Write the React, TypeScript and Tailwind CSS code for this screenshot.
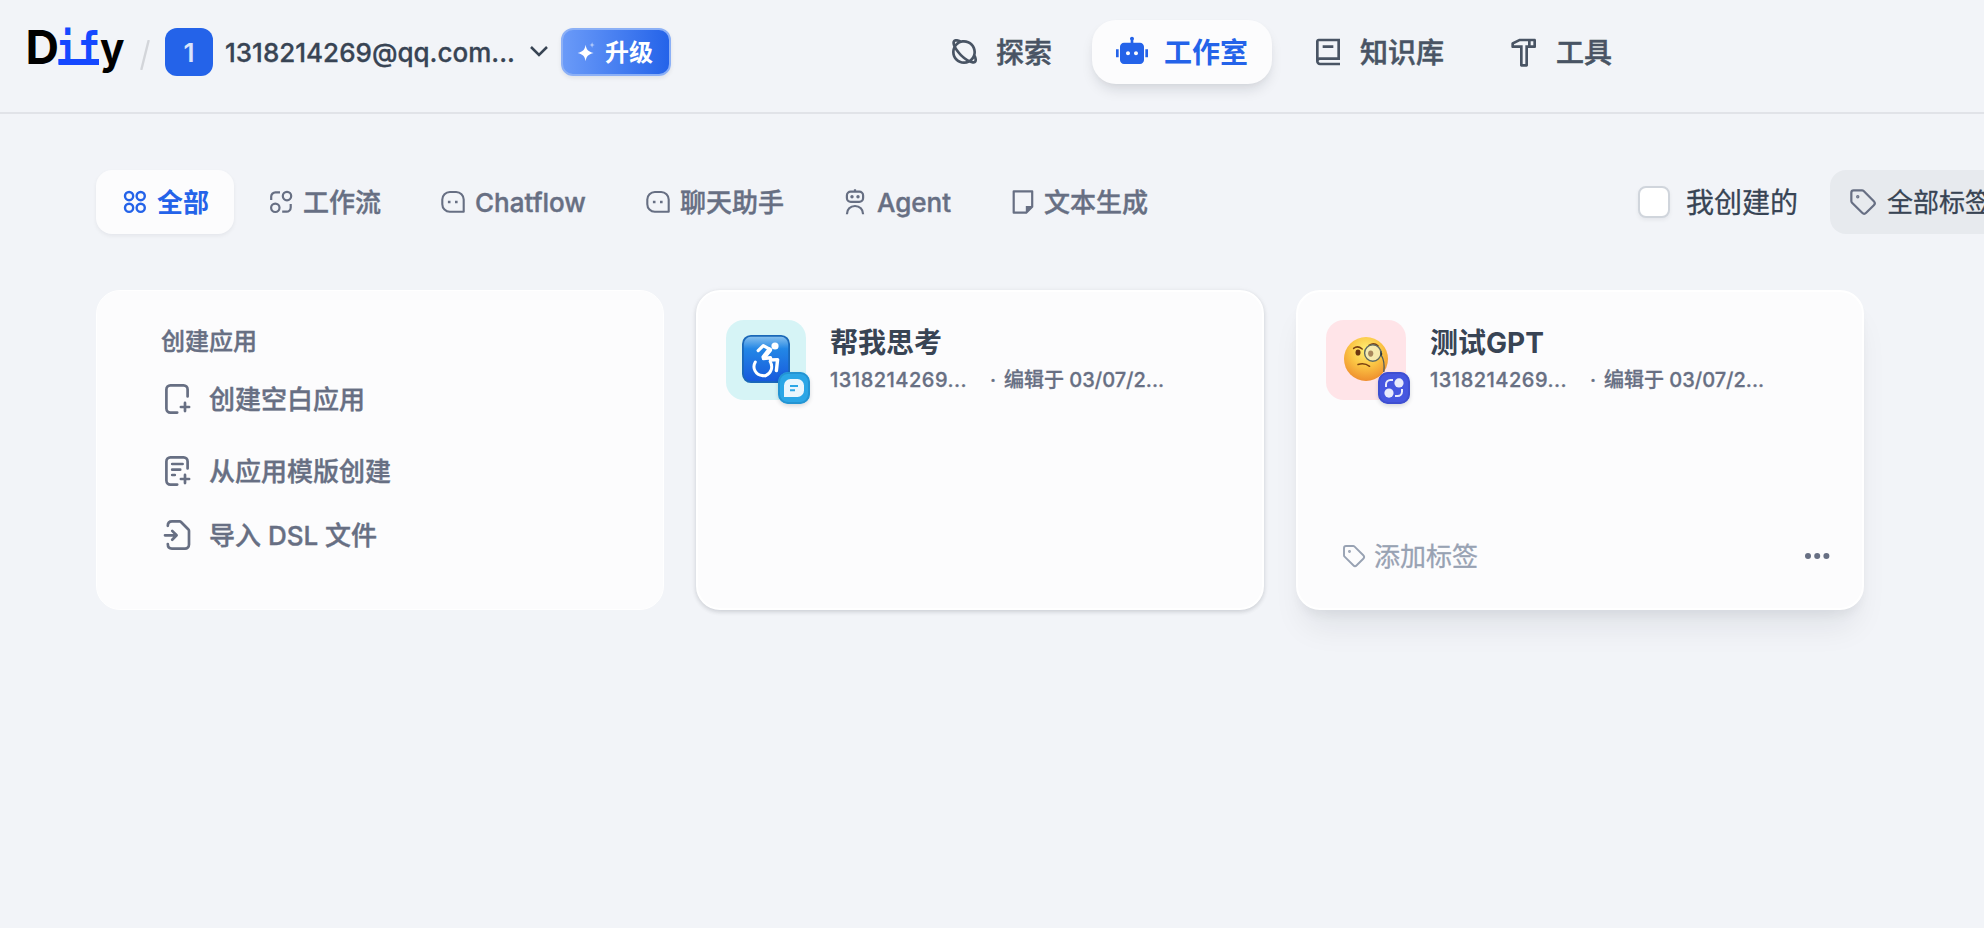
import type { ReactNode } from 'react';
import { RiBook2Line, RiHammerLine, RiPlanetLine, RiRobot2Fill } from 'react-icons/ri';
import { Tag } from 'lucide-react';

type IconProps = { children: ReactNode; size?: string; box?: number; width?: number };

function Glyph({ children, size = 'size-7', box = 28, width = 2.1 }: IconProps) {
  return (
    <svg
      className={`${size} shrink-0`}
      viewBox={`0 0 ${box} ${box}`}
      fill="none"
      stroke="currentColor"
      strokeWidth={width}
      strokeLinecap="butt"
      strokeLinejoin="round"
    >
      {children}
    </svg>
  );
}

const AllIcon = () => (
  <Glyph width={2.4}>
    <circle cx="8.1" cy="8.1" r="4.1" />
    <circle cx="19.7" cy="8.1" r="4.1" />
    <circle cx="8.1" cy="19.8" r="4.1" />
    <circle cx="19.7" cy="19.8" r="4.1" />
  </Glyph>
);

const WorkflowIcon = () => (
  <Glyph width={2.2}>
    <circle cx="20" cy="8.1" r="4.2" />
    <circle cx="8.3" cy="19.8" r="4.2" />
    <path d="M4.2 12V8.6a4.2 4.2 0 0 1 4.2-4.2H13M15.2 23.7h4.3a4.2 4.2 0 0 0 4.2-4.2V16" />
  </Glyph>
);

const ChatIcon = () => (
  <Glyph>
    <path d="M24.7 23.8V11.5a7.5 7.5 0 0 0-7.5-7.5h-6.4a7.5 7.5 0 0 0-7.5 7.5v4.8a7.5 7.5 0 0 0 7.5 7.5Z" />
    <path d="M8.9 14h2.6M16 14h2.6" strokeWidth="2.6" />
  </Glyph>
);

const AgentIcon = () => (
  <Glyph width={2.2}>
    <rect x="5.9" y="3.6" width="16.2" height="10.2" rx="3.8" />
    <path d="M14 1.2v2.4M5.9 26.2c0-4.800 3.400-8.200 8.100-8.200s8.100 3.400 8.100 8.200" />
    <circle cx="11" cy="8.7" r="1.7" fill="currentColor" stroke="none" />
    <circle cx="17" cy="8.7" r="1.7" fill="currentColor" stroke="none" />
  </Glyph>
);

const TextIcon = () => (
  <Glyph width={2.2}>
    <path d="M5.7 3.3h18.5v15.4l-6 6H5.7Z" />
    <path d="M17.8 18H25l-7.200 7.400Z" fill="currentColor" stroke="none" />
  </Glyph>
);

const FileOutline = 'M26.600 13.400V6.400a4 4 0 0 0-4-4H9.400a4 4 0 0 0-4 4v19.200a4 4 0 0 0 4 4h6.800';

const BlankFileIcon = () => (
  <Glyph size="size-8" box={32} width={2.7}>
    <g strokeLinecap="round">
      <path d={FileOutline} />
      <path d="M24 19.900v8.200M19.900 24h8.200" />
    </g>
  </Glyph>
);

const TemplateIcon = () => (
  <Glyph size="size-8" box={32} width={2.7}>
    <g strokeLinecap="round">
      <path d={FileOutline} />
      <path d="M24 19.900v8.200M19.900 24h8.200M11.200 9h10.400M11.200 14.700h8M11.200 20h2.600" />
    </g>
  </Glyph>
);

const ImportIcon = () => (
  <Glyph size="size-8" box={32} width={2.7}>
    <g strokeLinecap="round">
      <path d="M6.800 6.800c0-2.600 1.600-4.400 4.200-4.400h7.600c.6 0 1 .2 1.400.6l7.200 7.200c.5.5.8 1 .8 1.600v13.800a4 4 0 0 1-4 4H11c-2.600 0-4.200-1.800-4.200-4.600" />
      <path d="M4 16.300h11.400M11.200 11.900l4.400 4.400-4.400 4.400" />
    </g>
  </Glyph>
);

function Logo() {
  return (
    <svg className="mt-[26px] h-[52px] w-[100px] shrink-0 overflow-visible" viewBox="0 0 100 52">
      <text x="-0.5" y="38" fontFamily="Inter, sans-serif" fontSize="46.500" fontWeight="700" textLength="33.500" lengthAdjust="spacingAndGlyphs" fill="#000">
        D
      </text>
      <text x="30" y="38" fontFamily="DejaVu Sans Mono, monospace" fontSize="44" fontWeight="700" textLength="44" lengthAdjust="spacingAndGlyphs" fill="#1548ff">
        if
      </text>
      <rect x="32.5" y="33" width="40.500" height="6" fill="#1548ff" />
      <text x="74" y="38" fontFamily="Inter, sans-serif" fontSize="44" fontWeight="700" textLength="24.500" lengthAdjust="spacingAndGlyphs" fill="#000">
        y
      </text>
    </svg>
  );
}

function NavItem({ icon, label, active }: { icon: ReactNode; label: string; active?: boolean }) {
  return (
    <div
      className={`flex h-16 items-center gap-4 rounded-3xl px-6 text-[28px] ${
        active
          ? 'bg-[#fcfcfd] font-bold text-[#2463e9] shadow-[0_8px_14px_-3px_rgba(16,24,40,0.13),0_2px_6px_-2px_rgba(16,24,40,0.05)]'
          : 'font-medium text-[#495464] [-webkit-text-stroke:0.5px]'
      }`}
    >
      {icon}
      <span className="pt-0.5 leading-none whitespace-nowrap">{label}</span>
    </div>
  );
}

function Header() {
  return (
    <header className="flex h-[114px] shrink-0 items-start border-b-2 border-[#e1e3e8] pl-[26px]">
      <Logo />
      <svg className="mt-10 ml-[13px] h-[30px] w-3 shrink-0" viewBox="0 0 12 30">
        <path d="M9.500 1L2.500 29" stroke="#d3d5da" strokeWidth="2.400" strokeLinecap="round" />
      </svg>
      <div className="mt-7 ml-3.5 flex h-12 shrink-0 items-center">
        <div className="flex size-12 items-center justify-center rounded-xl bg-[#2463e9] text-[26px] font-semibold text-[#d9e4fb]">1</div>
        <div className="ml-3 w-[300px] text-[26px] font-medium whitespace-nowrap text-[#384454] [-webkit-text-stroke:0.3px]">
          1318214269@qq.com...
        </div>
        <svg className="ml-1 h-3 w-5 shrink-0" viewBox="0 0 20 12" fill="none" stroke="#384454" strokeWidth="2.500">
          <path d="M2 1l8 8 8-8" />
        </svg>
        <div className="ml-3 flex h-12 w-[110px] items-center rounded-xl border-2 border-[#8cb0f6] bg-linear-to-r from-[#6a9af8] to-[#2463e9] pl-3.5 shadow-[0_2px_4px_rgba(16,24,40,0.08)]">
          <svg className="size-5 shrink-0" viewBox="0 0 20 20" fill="#fff">
            <path d="M8.600 2.800c.9 5 2.400 6.800 8 8.200-5.600 1.400-7.100 3.200-8 8.200-.9-5-2.400-6.800-8-8.200 5.600-1.400 7.100-3.200 8-8.200Z" />
            <path d="M15.100 0c.3 2 .9 2.600 2.900 3-2 .4-2.600 1-2.900 3-.3-2-.9-2.600-2.900-3 2-.4 2.600-1 2.900-3Z" opacity="0.5" />
          </svg>
          <span className="ml-2 pt-0.5 text-2xl leading-none font-bold whitespace-nowrap text-white">升级</span>
        </div>
      </div>
      <nav className="mt-5 ml-[253px] flex shrink-0 gap-4">
        <NavItem icon={<RiPlanetLine className="size-8" />} label="探索" />
        <NavItem icon={<RiRobot2Fill className="size-8" />} label="工作室" active />
        <NavItem icon={<RiBook2Line className="size-8" />} label="知识库" />
        <NavItem icon={<RiHammerLine className="size-8" />} label="工具" />
      </nav>
    </header>
  );
}

function Tab({ icon, label, active }: { icon: ReactNode; label: string; active?: boolean }) {
  return (
    <div
      className={`flex h-16 items-center gap-2 rounded-2xl px-[25px] text-[26px] ${
        active
          ? 'bg-[#fcfcfd] font-bold text-[#2463e9] shadow-[0_2px_4px_rgba(16,24,40,0.06)]'
          : 'font-medium text-[#676f83] [-webkit-text-stroke:0.4px]'
      }`}
    >
      {icon}
      <span className="pt-0.5 leading-none whitespace-nowrap">{label}</span>
    </div>
  );
}

function Toolbar() {
  return (
    <div className="flex h-16 w-[2000px] items-center">
      <div className="flex w-[1542px] shrink-0 gap-2">
        <Tab icon={<AllIcon />} label="全部" active />
        <Tab icon={<WorkflowIcon />} label="工作流" />
        <Tab icon={<ChatIcon />} label="Chatflow" />
        <Tab icon={<ChatIcon />} label="聊天助手" />
        <div className="-mx-px">
          <Tab icon={<AgentIcon />} label="Agent" />
        </div>
        <Tab icon={<TextIcon />} label="文本生成" />
      </div>
      <div className="size-8 shrink-0 rounded-lg border-2 border-[#d0d5dc] bg-white shadow-[0_2px_4px_rgba(16,24,40,0.06)]" />
      <span className="ml-4 w-28 shrink-0 pt-0.5 text-[28px] leading-none whitespace-nowrap text-[#384454] [-webkit-text-stroke:0.3px]">
        我创建的
      </span>
      <div className="ml-8 flex h-16 w-[240px] shrink-0 items-center rounded-2xl bg-[#e7eaee] pl-[19px] text-[26px] text-[#384454] [-webkit-text-stroke:0.3px]">
        <Tag className="size-7 shrink-0 text-[#676f83]" strokeWidth={1.9} />
        <span className="ml-2.5 pt-0.5 leading-none whitespace-nowrap">全部标签</span>
      </div>
    </div>
  );
}

function CreateRow({ icon, label }: { icon: ReactNode; label: string }) {
  return (
    <div className="flex h-8 items-center gap-4">
      {icon}
      <span className="pt-0.5 text-[26px] leading-none whitespace-nowrap">{label}</span>
    </div>
  );
}

function CreateCard() {
  return (
    <section className="h-80 rounded-3xl border border-white bg-[#fcfcfd] pt-[39px] pl-16 font-medium text-[#676f83] [-webkit-text-stroke:0.4px]">
      <h2 className="text-2xl leading-6 font-medium">创建应用</h2>
      <div className="mt-[29px]">
        <CreateRow icon={<BlankFileIcon />} label="创建空白应用" />
      </div>
      <div className="mt-10">
        <CreateRow icon={<TemplateIcon />} label="从应用模版创建" />
      </div>
      <div className="mt-8">
        <CreateRow icon={<ImportIcon />} label="导入 DSL 文件" />
      </div>
    </section>
  );
}

function WheelchairArt() {
  return (
    <svg className="size-12" viewBox="0 0 48 48" fill="none">
      <defs>
        <linearGradient id="sky" x1="0" y1="0" x2="0" y2="1">
          <stop offset="0" stopColor="#8cc3ee" />
          <stop offset="0.28" stopColor="#2387e6" />
          <stop offset="1" stopColor="#1758dc" />
        </linearGradient>
      </defs>
      <rect x="0.9" y="0.9" width="46.200" height="46.200" rx="8" fill="url(#sky)" stroke="#1b68b8" strokeWidth="1.800" />
      <circle cx="33" cy="11" r="3.600" fill="#fff" />
      <g stroke="#fff" strokeLinecap="round" strokeLinejoin="round">
        <path d="M16.200 15.600L21.300 10.600L28.500 14.600L23 21" strokeWidth="3.300" />
        <path d="M27.500 15L22 22" strokeWidth="5" />
        <path d="M21.500 23.500L28.500 22.800V25L35.600 24.600L34.400 35.500" strokeWidth="3.400" />
        <path d="M28.200 26.500c3.400 5.800.6 12.400-4.700 14.200M20.500 40.600c-6.800-.4-10.700-7.600-7.200-13.600" strokeWidth="3" />
        <path d="M23.500 40.700a9 9 0 0 1-3 0" strokeWidth="3" />
      </g>
    </svg>
  );
}

function MonocleArt() {
  return (
    <svg className="size-12" viewBox="0 0 48 48" fill="none">
      <defs>
        <radialGradient id="face" cx="0.5" cy="0.3" r="0.72">
          <stop offset="0" stopColor="#fff176" />
          <stop offset="0.5" stopColor="#fbc544" />
          <stop offset="1" stopColor="#ee8b2c" />
        </radialGradient>
      </defs>
      <circle cx="24" cy="24" r="22" fill="url(#face)" />
      <path d="M11.600 13.400c2.400-2 5.800-1.800 8.600.6M27 10.400c3-2.200 6.600-1.800 9 .4" stroke="#7a4112" strokeWidth="1.500" strokeLinecap="round" />
      <ellipse cx="16" cy="17.500" rx="2.500" ry="3.100" fill="#6b3510" />
      <circle cx="30.800" cy="18" r="8.200" fill="#f5edbd" fillOpacity="0.85" stroke="#5f6a62" strokeWidth="1.400" />
      <ellipse cx="28.700" cy="18.600" rx="2.600" ry="3.100" fill="#a8875c" />
      <path d="M39.200 16v4c2.400 4 3.600 9 2.600 17" stroke="#4c5a5c" strokeWidth="1.300" />
      <path d="M38.500 16.500l2 2.400-2 2.400Z" fill="#263238" />
      <path d="M16 29.500c4-1.200 8.400-.6 11.600 1.800" stroke="#7a4112" strokeWidth="1.500" strokeLinecap="round" />
    </svg>
  );
}

const ChatBadge = () => (
  <svg className="absolute -right-1 -bottom-1 size-8 rounded-[10px] bg-[#2ba6e6] shadow-[0_2px_4px_rgba(16,24,40,0.15)]" viewBox="0 0 32 32" fill="none">
    <rect x="1" y="1" width="30" height="30" rx="9" stroke="#2494d2" strokeWidth="2" />
    <path d="M6 13.500A6.500 6.500 0 0 1 12.500 7h7A6.500 6.500 0 0 1 26 13.500v5a6.500 6.500 0 0 1-6.500 6.500H6Z" fill="#eaf6fd" />
    <path d="M12 14h8M12 18.300h5" stroke="#2ba6e6" strokeWidth="2" />
  </svg>
);

const WorkflowBadge = () => (
  <svg className="absolute -right-1 -bottom-1 size-8 rounded-[10px] bg-[#4657e0] shadow-[0_2px_4px_rgba(16,24,40,0.15)]" viewBox="0 0 32 32" fill="none">
    <rect x="1" y="1" width="30" height="30" rx="9" stroke="#3f4fd0" strokeWidth="2" />
    <circle cx="21" cy="10.900" r="4.600" fill="#e9ebfc" />
    <circle cx="11" cy="21.100" r="4.600" fill="#e9ebfc" />
    <path d="M8 15v-2.500A4.500 4.500 0 0 1 12.500 8H15M24 17v2.500a4.500 4.500 0 0 1-4.500 4.500H17" stroke="#e9ebfc" strokeWidth="2" />
  </svg>
);

type AppCardProps = { title: string; tile: string; art: ReactNode; badge: ReactNode; shadow: string; footer?: boolean };

function AppCard({ title, tile, art, badge, shadow, footer }: AppCardProps) {
  return (
    <section className={`flex h-80 flex-col justify-between rounded-3xl border-2 border-white bg-[#fcfcfd] px-7 pt-7 ${shadow}`}>
      <div className="flex">
        <div className={`relative flex size-20 shrink-0 justify-center rounded-[18px] pt-[15px] ${tile}`}>
          {art}
          {badge}
        </div>
        <div className="ml-6 pt-[9px]">
          <h3 className="text-[28px] leading-7 font-bold whitespace-nowrap text-[#384454]">{title}</h3>
          <div className="mt-[13px] flex text-xl leading-5 font-medium whitespace-nowrap text-[#676f83] [-webkit-text-stroke:0.3px]">
            <span className="w-[160px] tracking-[0.5px]">1318214269...</span>
            <span className="w-[14px]">·</span>
            <span>编辑于 03/07/2...</span>
          </div>
        </div>
      </div>
      {footer && (
        <div className="mb-9 flex h-8 items-center justify-between pr-1 pl-4 text-[#98a2b3]">
          <div className="flex items-center">
            <Tag className="size-6 shrink-0" strokeWidth={1.9} />
            <span className="ml-2 pt-0.5 text-[26px] leading-none whitespace-nowrap [-webkit-text-stroke:0.3px]">添加标签</span>
          </div>
          <svg className="h-6 w-[26px]" viewBox="0 0 26 24" fill="#676f83">
            <circle cx="4" cy="12" r="3" />
            <circle cx="13.200" cy="12" r="3" />
            <circle cx="22.400" cy="12" r="3" />
          </svg>
        </div>
      )}
    </section>
  );
}

export default function App() {
  return (
    <div className="flex h-[928px] w-full flex-col overflow-hidden bg-[#f2f4f8] font-['Inter','Noto_Sans_CJK_SC',sans-serif]">
      <Header />
      <main className="flex flex-col gap-14 pt-14 pl-24">
        <Toolbar />
        <div className="grid grid-cols-[568px_568px_568px] gap-8">
          <CreateCard />
          <AppCard
            title="帮我思考"
            tile="bg-[#d6f4f6]"
            art={<WheelchairArt />}
            badge={<ChatBadge />}
            shadow="shadow-[0_2px_4px_rgba(16,24,40,0.12),0_1px_6px_rgba(16,24,40,0.06)]"
          />
          <AppCard
            title="测试GPT"
            tile="bg-[#ffe4e8]"
            art={<MonocleArt />}
            badge={<WorkflowBadge />}
            shadow="shadow-[0_24px_32px_-8px_rgba(16,24,40,0.08),0_8px_12px_-4px_rgba(16,24,40,0.06)]"
            footer
          />
        </div>
      </main>
    </div>
  );
}
